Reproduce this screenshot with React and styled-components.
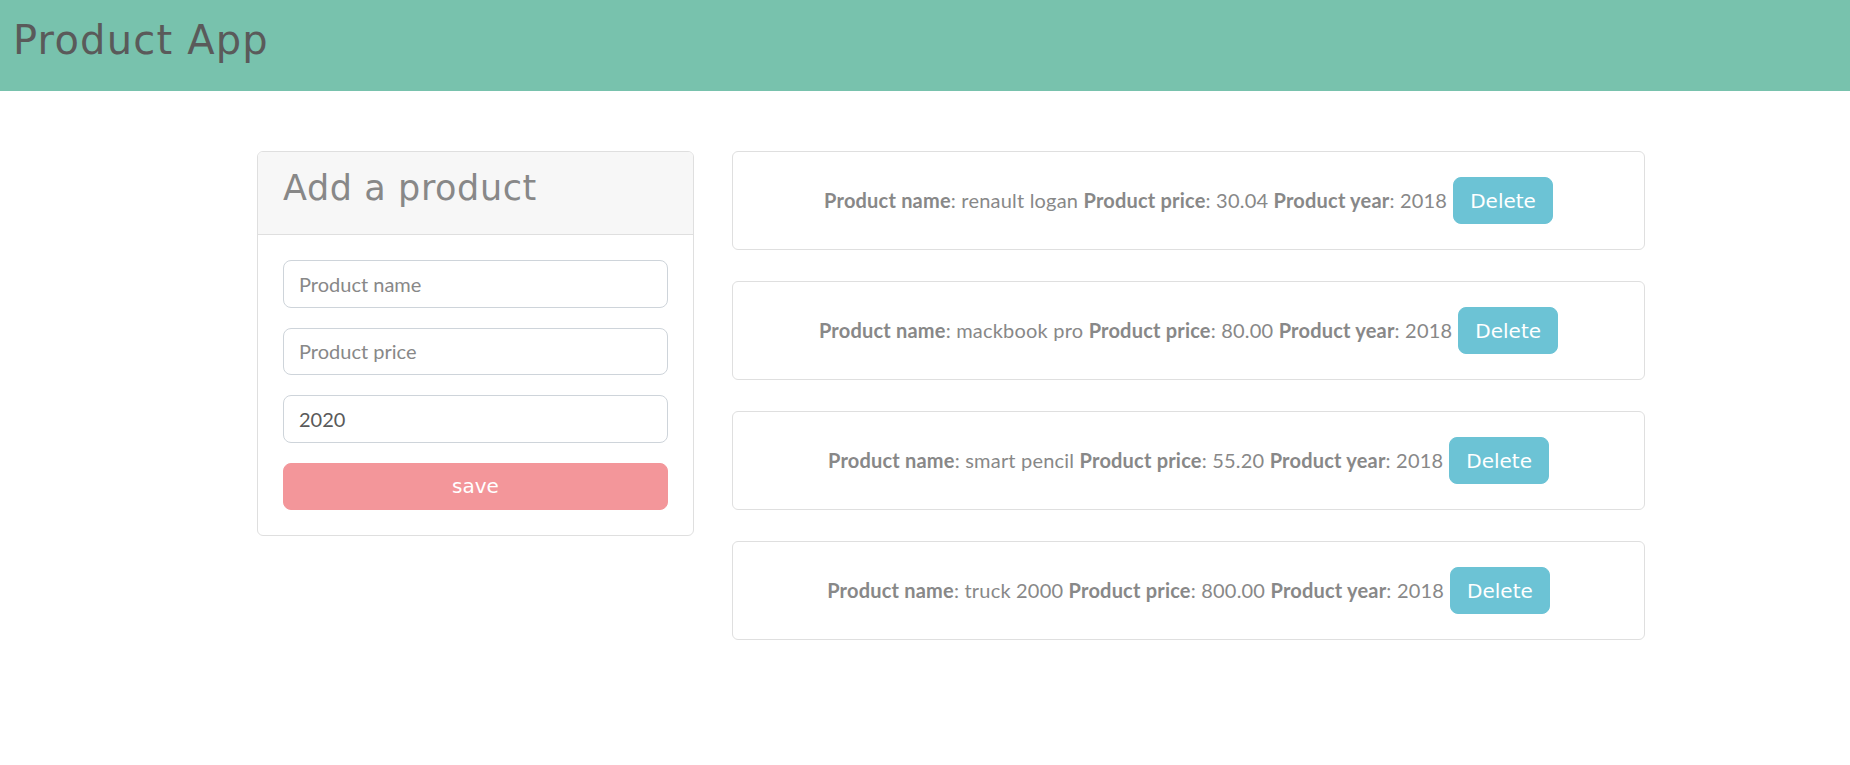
import React from 'react'
import styled, { createGlobalStyle } from 'styled-components'

const GlobalStyle = createGlobalStyle`
  body {
    margin: 0;
    font-family: Lato, "Open Sans", sans-serif;
    font-size: 20px;
    line-height: 1.5;
    color: #888;
    background: #fff;
  }
  * {
    box-sizing: border-box;
  }
`;

const NavBar = styled.div`
  height: 91px;
  background-color: #78c2ad;
  padding: 16px 10px 0 13px;
`;

const AppTitle = styled.h1`
  margin: 0;
  font-family: "DejaVu Sans", sans-serif;
  font-weight: normal;
  font-size: 40px;
  line-height: 1.2;
  letter-spacing: 1.2px;
  color: #5a5a5a;
`;

const Layout = styled.div`
  display: grid;
  grid-template-columns: 437px 913px;
  column-gap: 38px;
  align-items: start;
  margin: 60px 0 0 257px;
`;

const Card = styled.div`
  border: 1px solid #dfdfdf;
  border-radius: 6px;
  background: #fff;
  overflow: hidden;
`;

const CardHeader = styled.div`
  background: #f7f7f7;
  border-bottom: 1px solid #dfdfdf;
  padding: 15px 25px;
`;

const CardTitle = styled.h3`
  margin: 0 0 10px 0;
  font-family: "DejaVu Sans", sans-serif;
  font-weight: normal;
  font-size: 35px;
  line-height: 1.2;
  letter-spacing: 0.6px;
  color: #888;
`;

const CardBody = styled.div`
  padding: 25px;
`;

const FormGroup = styled.div`
  margin-bottom: 20px;
`;

const Input = styled.input`
  display: block;
  width: 100%;
  height: 47.5px;
  padding: 7px 15px;
  font-family: Lato, "Open Sans", sans-serif;
  font-size: 20px;
  line-height: 1.5;
  color: #5a5a5a;
  background: #fff;
  border: 1px solid #ced4da;
  border-radius: 8px;
  outline: none;
  &::placeholder {
    color: #888;
  }
`;

const Button = styled.button`
  display: ${props => (props.block ? 'block' : 'inline-block')};
  width: ${props => (props.block ? '100%' : 'auto')};
  height: ${props => (props.block ? '47.5px' : '47px')};
  flex: none;
  padding: 7px 16px;
  font-family: "DejaVu Sans", sans-serif;
  font-size: 20px;
  line-height: 1.5;
  color: #fff;
  background-color: ${props => props.color};
  border: 1px solid ${props => props.color};
  border-radius: 8px;
  cursor: pointer;
`;

const ListCard = styled(Card)`
  margin-bottom: 31px;
`;

const ListBody = styled.div`
  display: flex;
  justify-content: center;
  align-items: baseline;
  gap: 6px;
  height: 97px;
  padding: 25px;
  white-space: nowrap;
`;

const Details = styled.span`
  letter-spacing: 0.2px;
`;

const Label = styled.b`
  font-weight: bold;
`;

class App extends React.Component {
  constructor (props) {
    super (props)
    this.state = {
      name: '',
      price: '',
      year: '2020',
      products: [
        { name: 'renault logan', price: '30.04', year: '2018' },
        { name: 'mackbook pro', price: '80.00', year: '2018' },
        { name: 'smart pencil', price: '55.20', year: '2018' },
        { name: 'truck 2000', price: '800.00', year: '2018' },
      ],
    }
  }

  onChange (field, e) {
    var obj = {}
    obj[field] = e.target.value
    this.setState(obj)
  }

  onSave () {
    const { name, price, year, products } = this.state
    if (!name) return
    this.setState({
      products: products.concat([{ name, price, year }]),
      name: '',
      price: '',
    })
  }

  onDelete (index) {
    this.setState({
      products: this.state.products.filter((p, i) => i !== index),
    })
  }

  render () {
    return (
      <div>
        <GlobalStyle />
        <NavBar>
          <AppTitle>Product App</AppTitle>
        </NavBar>
        <Layout>
          <Card>
            <CardHeader>
              <CardTitle>Add a product</CardTitle>
            </CardHeader>
            <CardBody>
              <FormGroup>
                <Input placeholder="Product name" value={this.state.name} onChange={(e) => this.onChange('name', e)} />
              </FormGroup>
              <FormGroup>
                <Input placeholder="Product price" value={this.state.price} onChange={(e) => this.onChange('price', e)} />
              </FormGroup>
              <FormGroup>
                <Input value={this.state.year} onChange={(e) => this.onChange('year', e)} />
              </FormGroup>
              <Button block color="#f3969a" onClick={() => this.onSave()}>save</Button>
            </CardBody>
          </Card>
          <div>
            {this.state.products.map((p, i) => (
              <ListCard key={i}>
                <ListBody>
                  <Details>
                    <Label>Product name</Label>: {p.name} <Label>Product price</Label>: {p.price} <Label>Product year</Label>: {p.year}
                  </Details>
                  <Button color="#6cc3d5" onClick={() => this.onDelete(i)}>Delete</Button>
                </ListBody>
              </ListCard>
            ))}
          </div>
        </Layout>
      </div>
    )
  }
}

export default App
